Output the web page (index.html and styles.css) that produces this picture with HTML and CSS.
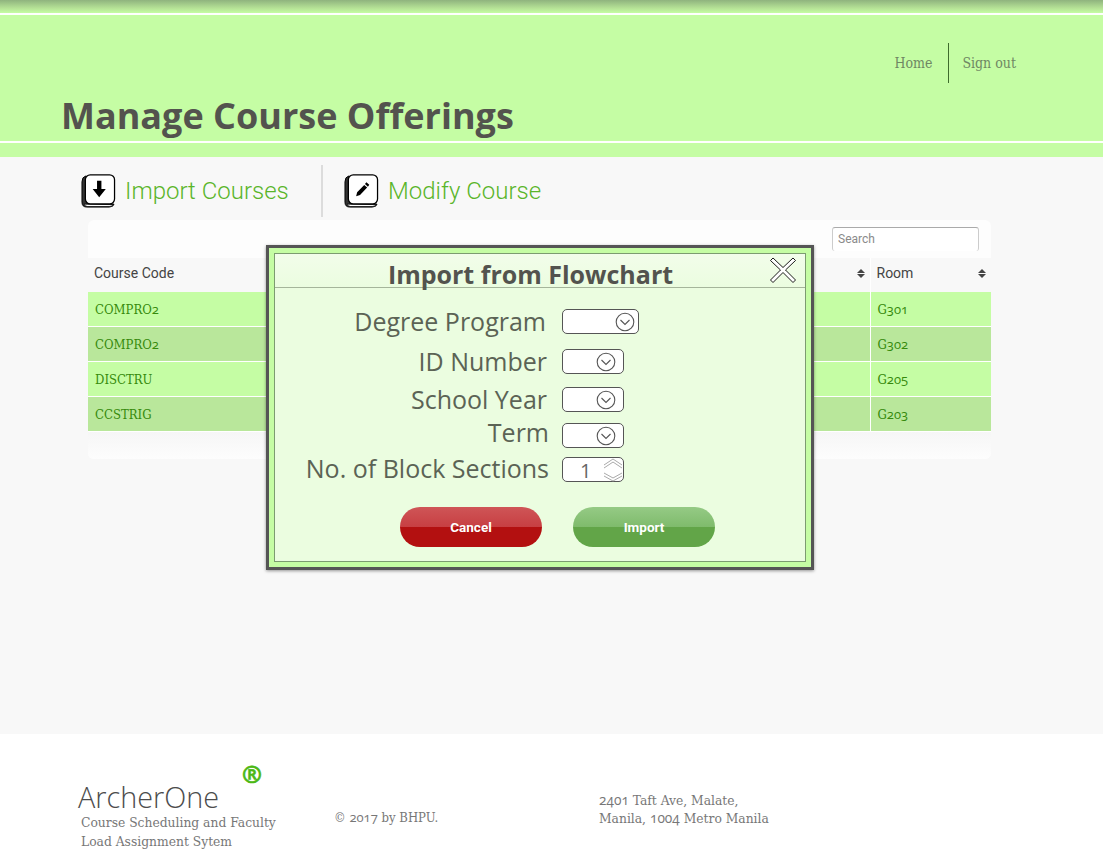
FILE: index.html
```html
<!DOCTYPE html>
<html lang="en">
<head>
    <meta charset="UTF-8">
    <title>Manage Course Offerings</title>
    <link rel="stylesheet" href="styles.css">
</head>
<body>
    <header class="site-header">
        <div class="top-strip"></div>
        <div class="header-band">
            <nav class="top-nav">
                <a class="nav-link nav-home">Home</a>
                <a class="nav-link nav-out">Sign out</a>
            </nav>
            <h1 class="page-title">Manage Course Offerings</h1>
        </div>
        <div class="header-foot"></div>
    </header>

    <main class="content">
        <div class="tabs">
            <a class="tab tab-import">
                <svg class="key-icon" width="35" height="35" viewBox="0 0 36 36">
                    <path d="M5 2 Q1 3 1 8 V29 Q1 34 6 34 H29 Q33 34 34 31 L6 30 Z" fill="#333" stroke="#000"/>
                    <path d="M3 31 Q4 33.5 7 33.5 H29 Q32 33.5 33 31.5 Z" fill="#fff" stroke="#000" stroke-width=".8"/>
                    <rect x="4.5" y="0.8" width="30" height="30" rx="5" fill="#fff" stroke="#000" stroke-width="1.3"/>
                    <path d="M16.5 7 H21 V15.5 H25.5 L18.7 24 L12 15.5 H16.5 Z" fill="#000"/>
                </svg>
                <span>Import Courses</span>
            </a>
            <a class="tab tab-modify">
                <svg class="key-icon" width="35" height="35" viewBox="0 0 36 36">
                    <path d="M5 2 Q1 3 1 8 V29 Q1 34 6 34 H29 Q33 34 34 31 L6 30 Z" fill="#333" stroke="#000"/>
                    <path d="M3 31 Q4 33.5 7 33.5 H29 Q32 33.5 33 31.5 Z" fill="#fff" stroke="#000" stroke-width=".8"/>
                    <rect x="4.5" y="0.8" width="30" height="30" rx="5" fill="#fff" stroke="#000" stroke-width="1.3"/>
                    <path d="M23 8.5 L26 11 L24.6 13 L21.6 10.4 Z M20.8 11.4 L23.8 14 L16.5 21.5 L12.5 23 L13.5 18.8 Z" fill="#000"/>
                </svg>
                <span>Modify Course</span>
            </a>
        </div>

        <section class="table-card">
            <div class="table-tools">
                <input class="search-box" type="text" placeholder="Search">
            </div>
            <table class="course-table">
                <thead>
                    <tr>
                        <th class="col-code">Course Code</th>
                        <th class="col-rest"><span class="sort"></span></th>
                        <th class="col-room">Room<span class="sort"></span></th>
                    </tr>
                </thead>
                <tbody>
                    <tr><td>COMPRO<span class="oldnum">2</span></td><td></td><td>G<span class="oldnum">301</span></td></tr>
                    <tr><td>COMPRO<span class="oldnum">2</span></td><td></td><td>G<span class="oldnum">302</span></td></tr>
                    <tr><td>DISCTRU</td><td></td><td>G<span class="oldnum">205</span></td></tr>
                    <tr><td>CCSTRIG</td><td></td><td>G<span class="oldnum">203</span></td></tr>
                </tbody>
            </table>
            <div class="table-foot"></div>
        </section>

        <div class="modal">
            <div class="modal-inner">
                <div class="modal-head">
                    <h2 class="modal-title">Import from Flowchart</h2>
                    <svg class="modal-close" width="26" height="26" viewBox="0 0 26 26">
                        <path d="M3 1 L13 10.5 L23 1 L25.5 3.5 L15.5 13 L25.5 23 L23 25.5 L13 15.5 L3 25.5 L.5 23 L10.5 13 L.5 3.5 Z" fill="#fff" stroke="#000" stroke-width=".9"/>
                    </svg>
                </div>
                <div class="import-form">
                    <div class="form-row row-degree">
                        <label class="form-label">Degree Program</label>
                        <div class="fake-select wide">
                            <svg class="chev" width="20" height="20" viewBox="0 0 20 20"><circle cx="10" cy="10" r="8.8" fill="none" stroke="#555" stroke-width="1.1"/><path d="M5.5 8 L10 12.5 L14.5 8" fill="none" stroke="#555" stroke-width="1.1"/></svg>
                        </div>
                    </div>
                    <div class="form-row row-id">
                        <label class="form-label">ID Number</label>
                        <div class="fake-select">
                            <svg class="chev" width="20" height="20" viewBox="0 0 20 20"><circle cx="10" cy="10" r="8.8" fill="none" stroke="#555" stroke-width="1.1"/><path d="M5.5 8 L10 12.5 L14.5 8" fill="none" stroke="#555" stroke-width="1.1"/></svg>
                        </div>
                    </div>
                    <div class="form-row row-year">
                        <label class="form-label">School Year</label>
                        <div class="fake-select">
                            <svg class="chev" width="20" height="20" viewBox="0 0 20 20"><circle cx="10" cy="10" r="8.8" fill="none" stroke="#555" stroke-width="1.1"/><path d="M5.5 8 L10 12.5 L14.5 8" fill="none" stroke="#555" stroke-width="1.1"/></svg>
                        </div>
                    </div>
                    <div class="form-row row-term">
                        <label class="form-label">Term</label>
                        <div class="fake-select">
                            <svg class="chev" width="20" height="20" viewBox="0 0 20 20"><circle cx="10" cy="10" r="8.8" fill="none" stroke="#555" stroke-width="1.1"/><path d="M5.5 8 L10 12.5 L14.5 8" fill="none" stroke="#555" stroke-width="1.1"/></svg>
                        </div>
                    </div>
                    <div class="form-row row-block">
                        <label class="form-label">No. of Block Sections</label>
                        <div class="fake-select spinner">
                            <span class="spin-value">1</span>
                            <svg class="spin" width="20" height="24" viewBox="0 0 20 24">
                                <path d="M1 7 L10 1 L19 7 M1 10 L10 4 L19 10 M1 15 L10 20 L19 15 M1 18 L10 23 L19 18" fill="none" stroke="#aaa" stroke-width="1"/>
                            </svg>
                        </div>
                    </div>
                </div>
                <div class="modal-buttons">
                    <button class="pill pill-cancel">Cancel</button>
                    <button class="pill pill-import">Import</button>
                </div>
            </div>
        </div>
    </main>

    <footer class="site-footer">
        <div class="brand">
            <div class="brand-mark">&reg;</div>
            <div class="brand-name">ArcherOne</div>
            <p class="brand-sub">Course Scheduling and Faculty<br>Load Assignment Sytem</p>
        </div>
        <p class="copyright">&copy; <span class="oldnum">2017</span> by BHPU.</p>
        <p class="address"><span class="oldnum">2401</span> Taft Ave, Malate,<br>Manila, <span class="oldnum">1004</span> Metro Manila</p>
    </footer>
</body>
</html>
```

FILE: styles.css
```css
html, body {
    margin: 0;
    padding: 0;
}

body {
    font-family: "DejaVu Serif Condensed", "DejaVu Serif", serif;
    background-color: #fff;
    height: 861px;
    overflow: hidden;
}

.oldnum {
    font-family: "Open Sans", sans-serif;
    font-variant-numeric: oldstyle-nums;
    line-height: 1;
}

.top-strip {
    height: 13px;
    background: linear-gradient(to bottom, #8fb37e, #b4e095 60%, #c5fda4);
}

.header-band {
    height: 126px;
    padding: 0 61px;
    background-color: #c5fda4;
    border-top: 2px solid #fff;
    border-bottom: 2px solid #fff;
    position: relative;
}

.header-foot {
    height: 14px;
    background-color: #c5fda4;
}

.top-nav {
    display: flex;
    justify-content: flex-end;
    padding: 28px 26px 0 0;
    height: 40px;
}

.nav-link {
    font-size: 14px;
    line-height: 40px;
    color: #6f8763;
}

.nav-home {
    padding-right: 16px;
    border-right: 1px solid #3e6b2c;
}

.nav-out {
    padding-left: 13px;
}

.page-title {
    margin: 10px 0 0 0;
    font-family: "Open Sans", sans-serif;
    font-size: 36px;
    line-height: 46px;
    font-weight: 700;
    color: #53534e;
}

.content {
    position: relative;
    height: 577px;
    background-color: #f8f8f8;
}

.tabs {
    display: flex;
    height: 63px;
    padding-left: 81px;
    box-sizing: border-box;
}

.tab {
    display: flex;
    align-items: center;
    gap: 9px;
    height: 52px;
    margin-top: 8px;
    font-family: "Roboto", sans-serif;
    font-weight: 300;
    font-size: 24px;
    color: #5ab52a;
}

.tab-import {
    width: 240px;
    border-right: 2px solid #dcdcdc;
}

.tab-modify {
    padding-left: 21px;
}

.key-icon {
    flex: none;
}

.table-card {
    margin: 0 112px 0 88px;
    background-color: #fdfdfd;
    border-radius: 6px;
    overflow: hidden;
}

.table-tools {
    height: 38px;
    display: flex;
    justify-content: flex-end;
    padding: 7px 12px 0 0;
    box-sizing: border-box;
}

.search-box {
    width: 147px;
    height: 24px;
    box-sizing: border-box;
    padding: 0 5px 2px;
    border: 1px solid #ccc;
    border-top-color: #aaa;
    border-bottom: none;
    border-radius: 3px;
    background: #fff;
    font-family: "Roboto", sans-serif;
    font-size: 12px;
}

.search-box::placeholder {
    color: #8a8a8a;
}

.course-table {
    width: 100%;
    border-collapse: collapse;
    table-layout: fixed;
}

.course-table th {
    height: 34px;
    padding: 0 6px 5px;
    box-sizing: border-box;
    position: relative;
    text-align: left;
    background-color: #f8f8f8;
    border-right: 1px solid #fff;
    font-family: "Roboto", sans-serif;
    font-weight: 400;
    font-size: 14px;
    color: #444;
}

.course-table th:last-child {
    border-right: none;
}

.col-room {
    width: 121px;
}

.col-code {
    width: 200px;
}

.sort {
    position: absolute;
    right: 5px;
    top: 11px;
    width: 0;
    height: 0;
    border-left: 4px solid transparent;
    border-right: 4px solid transparent;
    border-bottom: 4px solid #444;
}

.sort::after {
    content: "";
    position: absolute;
    left: -4px;
    top: 5px;
    border-left: 4px solid transparent;
    border-right: 4px solid transparent;
    border-top: 4px solid #444;
}

.course-table td {
    height: 34px;
    padding: 0 7px;
    border-right: 1px solid #fff;
    border-bottom: 1px solid #fff;
    font-size: 13px;
    color: #368a0c;
    background-color: #c5fda4;
}

.course-table td:last-child {
    border-right: none;
}

.course-table tbody tr:nth-child(even) td {
    background-color: #b9e79b;
}

.table-foot {
    height: 27px;
    background: linear-gradient(to bottom, #f6f6f6, #fdfdfd);
}

/* import dialog sits over the table */
.modal {
    position: absolute;
    left: 266px;
    top: 88px;
    width: 548px;
    height: 325px;
    box-sizing: border-box;
    padding: 5px;
    border: 3px solid #555;
    background-color: #c5fda4;
    box-shadow: 0 1px 3px rgba(0, 0, 0, 0.4);
}

.modal-inner {
    height: 100%;
    box-sizing: border-box;
    border: 1px solid #7c9c70;
    background-color: #ebfde0;
}

.modal-head {
    position: relative;
    height: 33px;
    border-bottom: 1px solid #a5b59b;
    background: linear-gradient(to bottom, #f2fdea, #ebfde0);
}

.modal-title {
    margin: 0;
    padding-right: 19px;
    text-align: center;
    font-family: "Open Sans", sans-serif;
    font-size: 25px;
    line-height: 41px;
    height: 33px;
    font-weight: 700;
    color: #53534e;
}

.modal-close {
    position: absolute;
    right: 9px;
    top: 3px;
}

.import-form {
    padding-top: 21px;
}

.form-row {
    display: flex;
    align-items: center;
    height: 25px;
    font-family: "Open Sans", sans-serif;
}

.form-label {
    width: 271px;
    text-align: right;
    font-size: 25px;
    line-height: 25px;
    color: #5b6355;
    flex: none;
}

.row-id {
    margin-top: 15px;
}

.row-id .form-label, .row-year .form-label {
    width: 272px;
}

.row-year {
    margin-top: 13px;
}

.row-term {
    margin-top: 11px;
}

.row-term .form-label {
    width: 274px;
    margin-top: -7px;
}

.row-block {
    margin-top: 9px;
}

.row-block .form-label {
    width: 274px;
    margin-top: -2px;
}

.fake-select {
    position: relative;
    width: 62px;
    height: 25px;
    box-sizing: border-box;
    margin-left: 13px;
    border: 1px solid #555;
    border-radius: 5px;
    background-color: #fff;
    flex: none;
}

.row-degree .fake-select {
    margin-left: 16px;
}

.row-id .fake-select, .row-year .fake-select {
    margin-left: 15px;
}

.fake-select.wide {
    width: 77px;
}

.chev {
    position: absolute;
    right: 7px;
    top: 2px;
}

.wide .chev {
    right: 3px;
}

.spin-value {
    position: absolute;
    left: 17px;
    top: 0;
    font-size: 20px;
    line-height: 25px;
    color: #666;
}

.spin {
    position: absolute;
    right: 0;
    top: 0;
}

.modal-buttons {
    display: flex;
    gap: 31px;
    padding: 25px 0 0 125px;
}

.pill {
    width: 142px;
    height: 40px;
    padding: 0;
    border: none;
    border-radius: 20px;
    font-family: "Roboto", sans-serif;
    font-size: 13.5px;
    font-weight: 700;
    color: #fff;
}

.pill-cancel {
    background: linear-gradient(to bottom, #cf5557, #c73f42 50%, #b31010 50%, #b31010);
}

.pill-import {
    background: linear-gradient(to bottom, #95ca85, #7fbb6c 50%, #62a548 50%, #62a548);
}

.site-footer {
    position: relative;
    height: 127px;
    display: flex;
    background-color: #fff;
    font-size: 13.7px;
    line-height: 19px;
    color: #777;
}

.brand {
    width: 334px;
    padding-left: 78px;
    box-sizing: border-box;
    padding-top: 29px;
    flex: none;
}

.brand-mark {
    height: 20px;
    margin-left: 164px;
    font-family: "Open Sans", sans-serif;
    font-weight: 700;
    font-size: 24px;
    line-height: 22px;
    color: #4cb814;
    -webkit-text-stroke: 0.6px #4cb814;
}

.brand-name {
    font-family: "Open Sans", sans-serif;
    font-weight: 300;
    font-size: 28.8px;
    line-height: 27px;
    color: #4c4c4c;
}

.brand-sub {
    margin: 3px 0 0 3px;
}

.copyright {
    width: 265px;
    flex: none;
    margin: 74px 0 0 0;
    font-size: 13px;
}

.address {
    margin: 57px 0 0 0;
    line-height: 18px;
}
```
